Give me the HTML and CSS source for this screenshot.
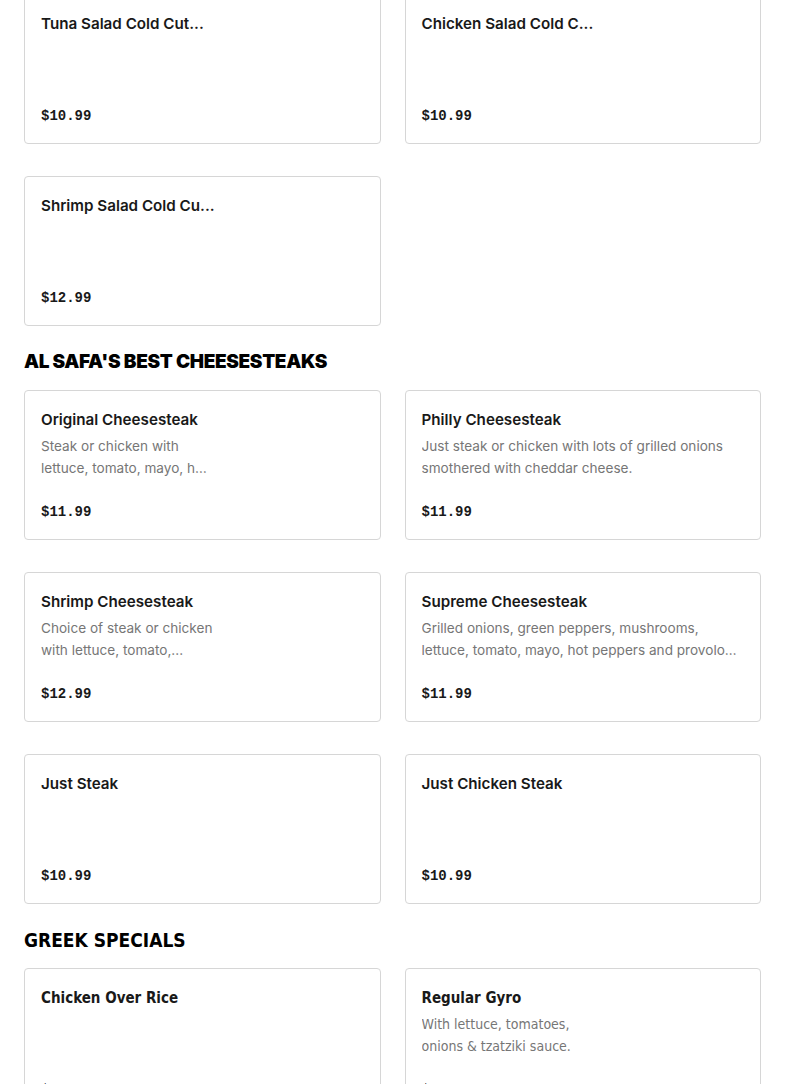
FILE: index.html
```html
<!DOCTYPE html>
<html>
<head>
<meta charset="utf-8">
<link rel="stylesheet" href="styles.css">
</head>
<body>
<main class="menu">
  <section class="section first">
    <div class="grid">
      <div class="card">
        <div class="title">Tuna Salad Cold Cut...</div>
        <div class="price">$10.99</div>
      </div>
      <div class="card">
        <div class="title">Chicken Salad Cold C...</div>
        <div class="price">$10.99</div>
      </div>
      <div class="card">
        <div class="title">Shrimp Salad Cold Cu...</div>
        <div class="price">$12.99</div>
      </div>
    </div>
  </section>

  <section class="section">
    <h2 class="heading">AL SAFA'S BEST CHEESESTEAKS</h2>
    <div class="grid">
      <div class="card">
        <div class="title">Original Cheesesteak</div>
        <div class="desc narrow">Steak or chicken with lettuce, tomato, mayo, hot peppers and provolone cheese.</div>
        <div class="price">$11.99</div>
      </div>
      <div class="card">
        <div class="title">Philly Cheesesteak</div>
        <div class="desc">Just steak or chicken with lots of grilled onions smothered with cheddar cheese.</div>
        <div class="price">$11.99</div>
      </div>
      <div class="card">
        <div class="title">Shrimp Cheesesteak</div>
        <div class="desc narrow">Choice of steak or chicken with lettuce, tomato,...</div>
        <div class="price">$12.99</div>
      </div>
      <div class="card">
        <div class="title">Supreme Cheesesteak</div>
        <div class="desc">Grilled onions, green peppers, mushrooms, lettuce, tomato, mayo, hot peppers and provolone cheese.</div>
        <div class="price">$11.99</div>
      </div>
      <div class="card">
        <div class="title">Just Steak</div>
        <div class="price">$10.99</div>
      </div>
      <div class="card">
        <div class="title">Just Chicken Steak</div>
        <div class="price">$10.99</div>
      </div>
    </div>
  </section>

  <section class="section greek">
    <h2 class="heading">GREEK SPECIALS</h2>
    <div class="grid">
      <div class="card">
        <div class="title">Chicken Over Rice</div>
        <div class="price">$12.99</div>
      </div>
      <div class="card">
        <div class="title">Regular Gyro</div>
        <div class="desc narrow">With lettuce, tomatoes, onions &amp; tzatziki sauce.</div>
        <div class="price">$9.99</div>
      </div>
    </div>
  </section>
</main>
</body>
</html>
```

FILE: styles.css
```css
html, body {
  margin: 0;
  padding: 0;
  background: #ffffff;
}

body {
  font-family: "Inter", "Liberation Sans", sans-serif;
  color: #191919;
}

.menu {
  padding: 0 24px;
  margin-top: -6px;
}

.section {
  padding-top: 24px;
}

.section.first {
  padding-top: 0;
}

.heading {
  margin: 0 0 16px;
  height: 24px;
  font-size: 19px;
  line-height: 24px;
  font-weight: 900;
  letter-spacing: -0.35px;
  color: #000;
}

.grid {
  display: grid;
  grid-template-columns: 1fr 1fr;
  column-gap: 24px;
  row-gap: 32px;
}

.card {
  box-sizing: border-box;
  height: 150px;
  border: 1px solid #d6d6d6;
  border-radius: 4px;
  padding: 17px 16px 17px;
  display: flex;
  flex-direction: column;
}

.title {
  font-size: 15.2px;
  line-height: 24px;
  font-weight: 600;
  color: #191919;
  white-space: nowrap;
}

.desc {
  margin-top: 3px;
  font-size: 13.6px;
  line-height: 22px;
  color: #767676;
  display: -webkit-box;
  -webkit-line-clamp: 2;
  -webkit-box-orient: vertical;
  overflow: hidden;
}

.desc.narrow {
  max-width: 174px;
}

.price {
  margin-top: auto;
  font-family: "Liberation Mono", monospace;
  font-weight: 700;
  font-size: 14px;
  line-height: 20px;
  color: #191919;
}

.greek .heading,
.greek .title,
.greek .desc {
  font-family: "Liberation Sans Narrow", "DejaVu Sans Condensed", "Liberation Sans", sans-serif;
  font-stretch: condensed;
}

.greek .heading {
  letter-spacing: 0;
}

.greek .title {
  font-size: 15px;
}

.greek .desc {
  font-size: 14px;
}
```
